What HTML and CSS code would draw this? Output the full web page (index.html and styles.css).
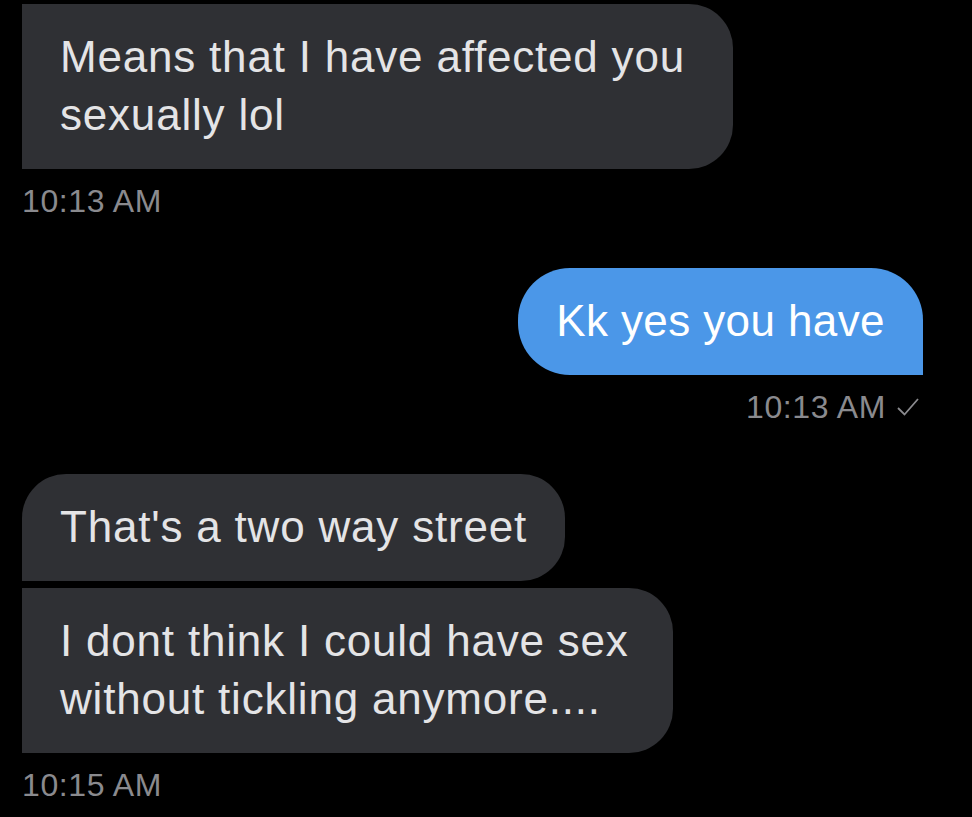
FILE: index.html
```html
<!DOCTYPE html>
<html lang="en">
<head>
    <meta charset="UTF-8">
    <meta name="viewport" content="width=device-width, initial-scale=1.0">
    <title>Messages</title>
    <link rel="stylesheet" href="styles.css">
</head>
<body>
    <div id="thread">
        <div class="msg them top bottom wrap">Means that I have affected you<br>sexually lol</div>
        <div class="time">10:13 AM</div>

        <div class="msg me">Kk yes you have</div>
        <div class="time mine">10:13 AM
            <svg class="tick" width="24" height="20" viewBox="0 0 24 20">
                <path d="M2 11 L8.5 17.5 L22 2" fill="none" stroke="#8a8a8e" stroke-width="1.8"/>
            </svg>
        </div>

        <div class="msg them bottom">That's a two way street</div>
        <div class="msg them top bottom wrap next">I dont think I could have sex<br>without tickling anymore....</div>
        <div class="time">10:15 AM</div>
    </div>
</body>
</html>
```

FILE: styles.css
```css
body{
    margin: 0;
    background: #000;
    font-family: "Liberation Sans", Arial, sans-serif;
}
#thread{
    display: flex;
    flex-direction: column;
    padding: 4px 49px 0 22px;
}
.msg{
    width: fit-content;
    padding: 24px 38px 25px;
    font-size: 44px;
    line-height: 58px;
    letter-spacing: 0.8px;
    border-radius: 44px;
}
.them{
    background: #2f3034;
    color: #e4e4e6;
}
.them.top{
    border-top-left-radius: 0;
}
.them.bottom{
    border-bottom-left-radius: 0;
}
.wrap{
    padding-right: 48px;
}
.next{
    margin-top: 7px;
    padding-right: 44px;
}
.me{
    align-self: flex-end;
    background: #4b97e8;
    color: #fff;
    letter-spacing: 0.4px;
    border-radius: 52px;
    border-bottom-right-radius: 0;
}
.time{
    margin: 12px 0 47px;
    font-size: 32px;
    line-height: 40px;
    letter-spacing: 0.6px;
    color: #8a8a8e;
}
.time.mine{
    align-self: flex-end;
    display: flex;
    align-items: center;
    gap: 10px;
}
.tick{
    margin-right: 3px;
}
```
